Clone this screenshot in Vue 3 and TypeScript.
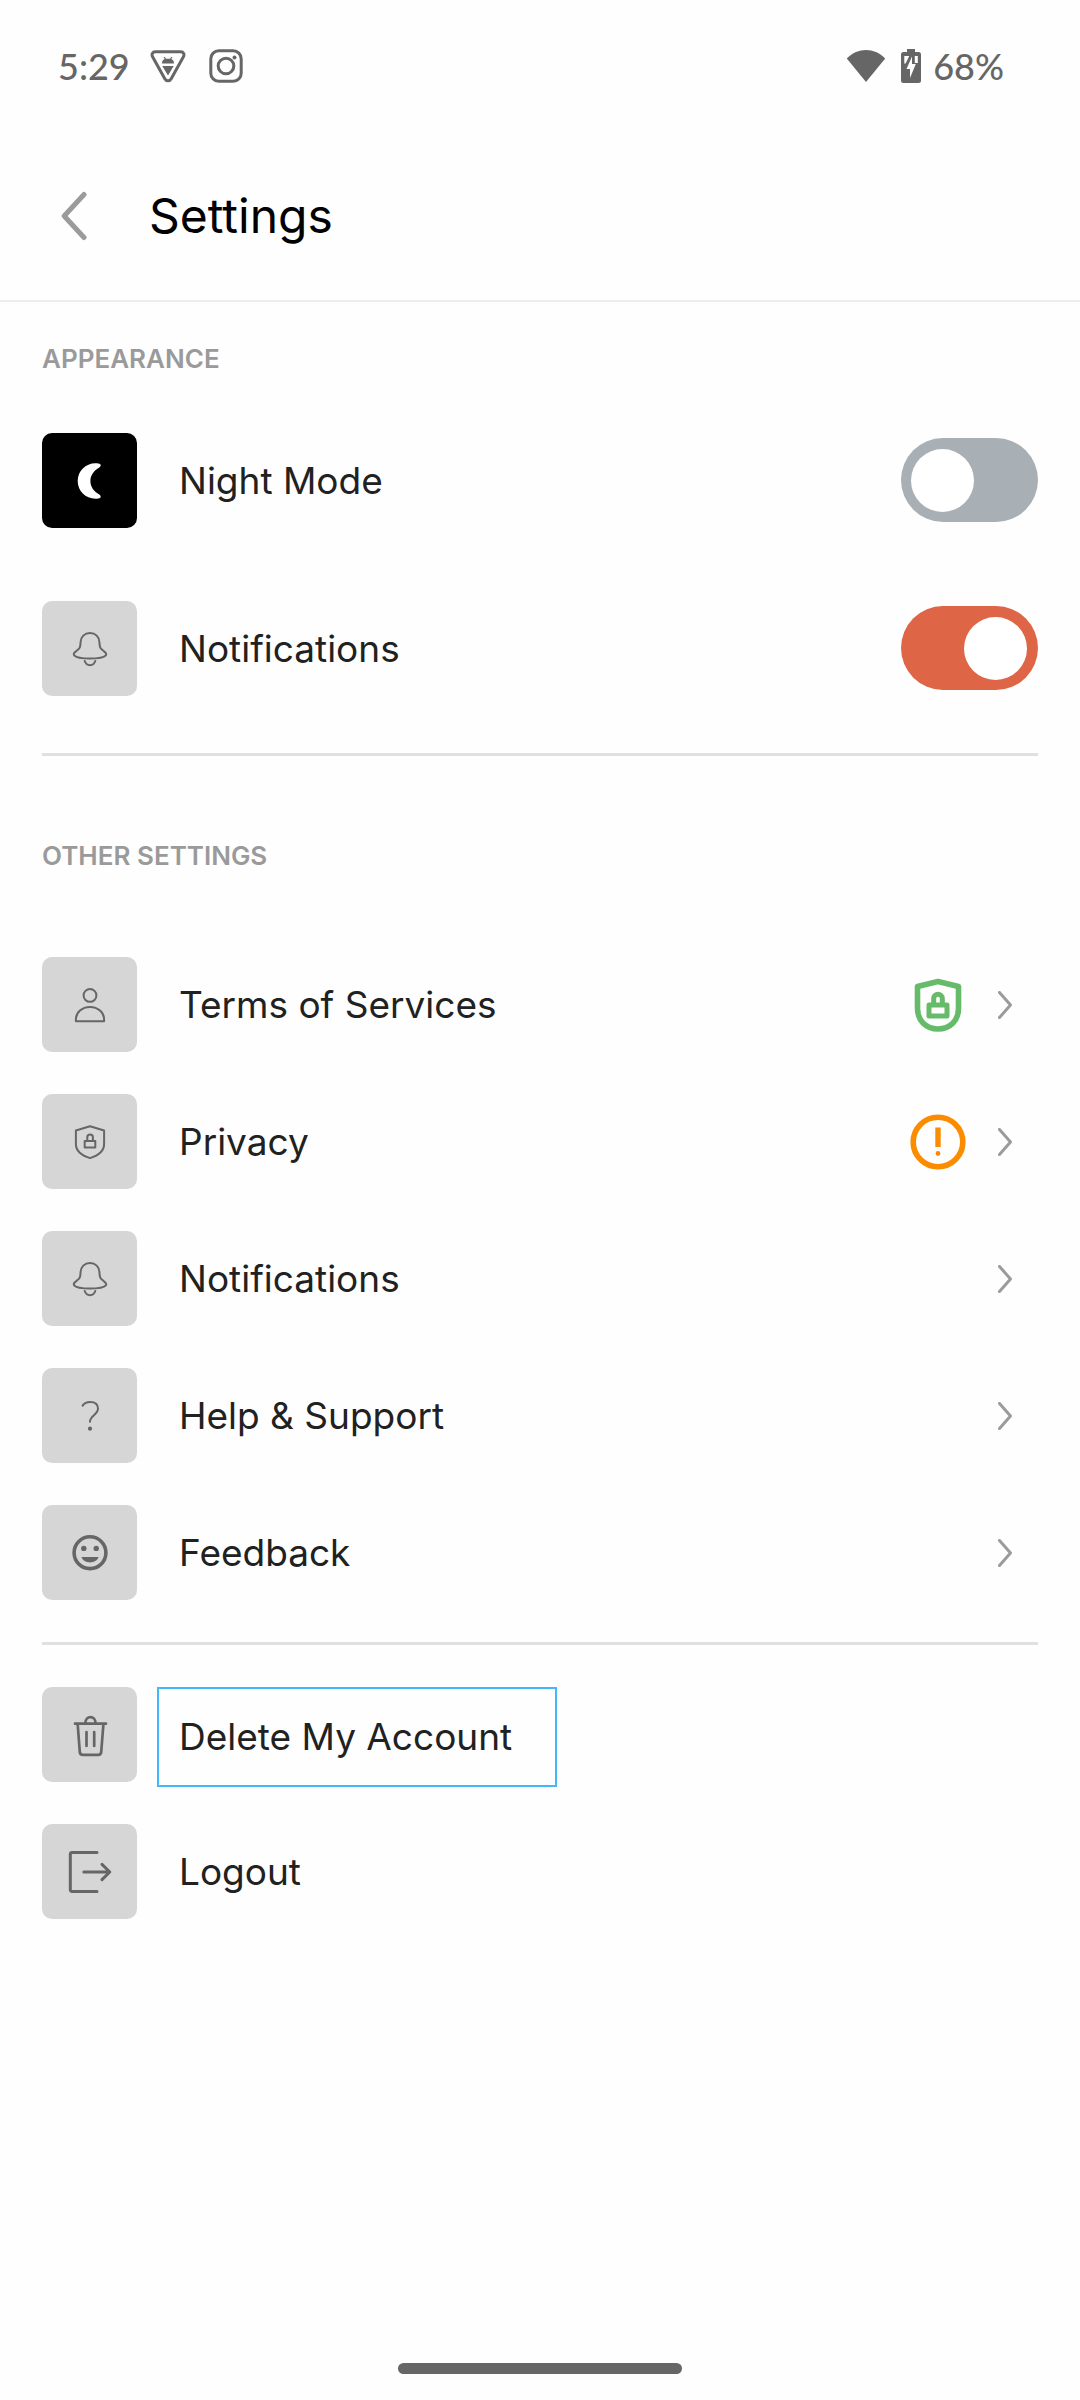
<script setup lang="ts">
import { ref } from 'vue'

type IconName = 'moon' | 'bell' | 'person' | 'shield' | 'question' | 'smile' | 'trash' | 'logout'
type Badge = 'secure' | 'alert'

interface LinkRow {
  icon: IconName
  label: string
  badge?: Badge
}

// Drawn in a 95-unit square, the size of an icon tile.
const icons: Record<IconName, string> = {
  moon: '<path fill="#fff" d="M53.500 30.300C55.500 30.300 57.500 30.700 58.300 31.300C59.100 32.200 58.600 33.800 57.300 34.500C52 37.500 48.400 42 48.400 48C48.400 54 52 58.500 57.300 61.500C58.600 62.200 59.100 63.800 58.300 64.700C57.500 65.300 55.500 65.700 53.500 65.700C43.500 65.700 35.700 57.800 35.700 48C35.700 38.200 43.500 30.300 53.500 30.300Z"/>',
  bell: '<path d="M48 32C42.400 32 38.800 36 38.600 41C38.400 46.500 37.800 47.600 34.600 49.800C31.800 51.600 31.300 53 32.200 54.400C34 56.600 41 57.600 48 57.600C55 57.600 62 56.600 63.800 54.400C64.700 53 64.200 51.600 61.400 49.800C58.200 47.600 57.600 46.500 57.400 41C57.200 36 53.600 32 48 32Z"/><path d="M42.700 60C43.700 62.800 45.700 64.200 48 64.200C50.300 64.200 52.300 62.800 53.300 60"/>',
  person: '<circle cx="48" cy="38.400" r="6.400"/><path d="M33.900 64.200V62.500C33.900 55.500 40 49.900 48 49.900C56 49.900 62.100 55.500 62.100 62.500V64.200Z"/>',
  shield: '<path d="M48 32.200L62.100 36.500V50C62.100 57 56.500 61.500 48 64.100C39.500 61.500 33.900 57 33.900 50V36.500Z"/><path d="M42.700 46.900H53.300V53.600H42.700ZM45.300 46.900V43.300C45.300 39.600 50.900 39.600 50.900 43.300V46.900"/>',
  question: '<path d="M40.600 37.600C42.300 35 45 33.900 48.200 33.900C53.200 33.900 56 36.600 56 40.600C56 46.800 48.200 47.600 47.900 53.800"/><circle cx="48" cy="60.700" r="2.100" fill="#666" stroke="none"/>',
  smile: '<circle cx="48" cy="47.700" r="15.900" stroke-width="3.600"/><g fill="#666" stroke="none"><circle cx="41.800" cy="43.400" r="2.700"/><circle cx="54.200" cy="43.400" r="2.700"/><path d="M39.300 52H56.700C55 55.800 51.800 57.400 48 57.400C44.200 57.400 41 55.800 39.300 52Z"/></g>',
  trash: '<g stroke-width="2.700"><path d="M33 36.700H64M43.300 36.300C43.300 28 53.600 28 53.600 36.300M35.700 37.500L37.800 65C38 66.900 39 67.800 40.700 67.800H56.300C58 67.800 59 66.900 59.200 65L61.400 37.500M44.500 45V59M52.200 45V59"/></g>',
  logout: '<g stroke-width="3"><path d="M55 28.500H30.200Q28.300 28.500 28.300 30.400V65.600Q28.300 67.500 30.200 67.500H55M41.800 48H67.600M60 40.400L67.800 48L60 55.600"/></g>',
}

const nightMode = ref(false)
const notifications = ref(true)

const links: LinkRow[] = [
  { icon: 'person', label: 'Terms of Services', badge: 'secure' },
  { icon: 'shield', label: 'Privacy', badge: 'alert' },
  { icon: 'bell', label: 'Notifications' },
  { icon: 'question', label: 'Help & Support' },
  { icon: 'smile', label: 'Feedback' },
]
</script>

<template>
  <div class="screen">
    <div class="status">
      <span class="status-text">5:29</span>
      <svg class="app-icon" width="36" height="34" viewBox="0 0 36 34" fill="none">
        <path d="M5.500 2.800H30.500C33.600 2.800 34.800 5.400 33.300 8L21.200 29.800C19.700 32.500 16.300 32.500 14.800 29.800L2.700 8C1.200 5.400 2.400 2.800 5.500 2.800Z" stroke="#666" stroke-width="3" />
        <path d="M12 14.500C12 12.200 13 10.800 14.700 10.100L13.600 8H14.900L15.900 9.700H20.100L21.100 8H22.400L21.300 10.100C23 10.800 24 12.200 24 14.500ZM12.300 17H23.700L18 26.500Z" fill="#666" />
      </svg>
      <svg class="camera-icon" width="34" height="34" viewBox="0 0 34 34" fill="none" stroke="#666">
        <rect x="1.800" y="1.800" width="30.400" height="30.400" rx="8" stroke-width="3" />
        <circle cx="17" cy="17" r="7.800" stroke-width="3" />
        <circle cx="25.500" cy="8.500" r="2" fill="#666" stroke="none" />
      </svg>
      <svg class="wifi" width="40" height="34" viewBox="0 0 40 34">
        <path d="M20 33L.8 9.500C12 -1.800 28 -1.800 39.200 9.500Z" fill="#666" />
      </svg>
      <svg class="battery" width="20" height="34" viewBox="0 0 20 34">
        <path d="M6 0H14V3H17.500Q20 3 20 5.500V31.500Q20 34 17.500 34H2.500Q0 34 0 31.500V5.500Q0 3 2.500 3H6Z" fill="#666" />
        <path d="M3.300 7H8.200L4.600 14.500H3.300ZM11 7.500V15H14.800L9 29V20H5.500ZM13.800 7H16.800V14H13.800Z" fill="#fff" />
      </svg>
      <span class="status-text">68%</span>
    </div>

    <header class="topbar">
      <button class="back" type="button" aria-label="Back">
        <svg width="26" height="50" viewBox="0 0 26 50" fill="none">
          <path d="M23 3.500L3.200 25L23 46.500" stroke="#9b9b9b" stroke-width="5" stroke-linecap="round" stroke-linejoin="round" />
        </svg>
      </button>
      <h1>Settings</h1>
    </header>

    <main>
      <section class="appearance">
        <h2>APPEARANCE</h2>
        <div class="rows loose">
          <label class="row">
            <span class="tile dark"><svg class="glyph" viewBox="0 0 95 95" v-html="icons.moon" /></span>
            <span class="label">Night Mode</span>
            <input v-model="nightMode" class="switch" type="checkbox" role="switch" />
          </label>
          <label class="row">
            <span class="tile"><svg class="glyph" viewBox="0 0 95 95" v-html="icons.bell" /></span>
            <span class="label">Notifications</span>
            <input v-model="notifications" class="switch" type="checkbox" role="switch" />
          </label>
        </div>
      </section>
      <hr />
      <section class="other">
        <h2>OTHER SETTINGS</h2>
        <nav class="rows">
          <a v-for="item in links" :key="item.label" class="row" href="#">
            <span class="tile"><svg class="glyph" viewBox="0 0 95 95" v-html="icons[item.icon]" /></span>
            <span class="label">{{ item.label }}</span>
            <svg v-if="item.badge === 'secure'" class="badge" viewBox="0 0 56 56" fill="none" stroke="#66bb6a" stroke-linejoin="round">
              <path d="M28 4.500L48.500 9.500V31.500C48.500 43.500 40 52 28 52C16 52 7.500 43.500 7.500 31.500V9.500Z" stroke-width="5.600" />
              <path d="M19 28H37V39H19Z" stroke-width="5" />
              <path d="M23.700 27V21.500C23.700 15.800 32.300 15.800 32.300 21.500V27" stroke-width="5" />
            </svg>
            <svg v-else-if="item.badge === 'alert'" class="badge" viewBox="0 0 56 56" fill="none">
              <circle cx="28" cy="28" r="24.800" stroke="#fb8c00" stroke-width="5.600" />
              <path d="M25.300 13.500H30.700V33H25.300Z" fill="#fb8c00" />
              <circle cx="28" cy="39.500" r="2.400" fill="#fb8c00" />
            </svg>
            <svg class="chevron" width="14" height="28" viewBox="0 0 14 28" fill="none">
              <path d="M1.500 1.500L12.500 14L1.500 26.500" stroke="#9b9b9b" stroke-width="3" stroke-linecap="round" stroke-linejoin="round" />
            </svg>
          </a>
        </nav>
      </section>
      <hr />
      <section class="rows account">
        <button class="row" type="button">
          <span class="tile"><svg class="glyph" viewBox="0 0 95 95" v-html="icons.trash" /></span>
          <span class="label highlighted">Delete My Account</span>
        </button>
        <button class="row" type="button">
          <span class="tile"><svg class="glyph" viewBox="0 0 95 95" v-html="icons.logout" /></span>
          <span class="label">Logout</span>
        </button>
      </section>
    </main>

    <div class="home-bar"></div>
  </div>
</template>

<style>
body {
  background: #fefefe;
}
</style>

<style scoped>
.screen {
  display: flex;
  flex-direction: column;
  box-sizing: border-box;
  min-height: 100vh;
  padding-bottom: 26px;
  color: #212121;
  font-family: Inter, "Liberation Sans", sans-serif;
}

.status {
  display: flex;
  align-items: center;
  height: 132px;
  padding: 0 76px 0 58px;
}

.status-text {
  color: #666;
  font: 500 36px/40px Lato, "Liberation Sans", sans-serif;
}

.app-icon {
  margin-left: 20px;
}

.camera-icon {
  margin-left: 23px;
}

.wifi {
  margin-left: auto;
}

.battery {
  margin: 0 12px 0 15px;
}

.topbar {
  display: flex;
  align-items: center;
  height: 168px;
  padding-left: 61px;
  border-bottom: 2px solid #ededed;
}

.back {
  display: flex;
  margin-right: 62px;
  padding: 0;
  border: 0;
  background: none;
}

h1 {
  margin: 0;
  color: #000;
  font-size: 48px;
  font-weight: 400;
  line-height: 60px;
}

main {
  padding: 0 42px;
}

h2 {
  margin: 0;
  color: #9a9a9a;
  font-size: 26px;
  font-weight: 600;
  line-height: 40px;
}

.appearance {
  padding: 37px 0 57px;
}

.appearance h2 {
  margin-bottom: 54px;
}

.other {
  padding: 80px 0 42px;
}

.other h2 {
  margin-bottom: 81px;
}

.account {
  padding-top: 42px;
}

hr {
  height: 3px;
  margin: 0;
  border: 0;
  background: #e0e0e0;
}

.rows {
  display: flex;
  flex-direction: column;
  gap: 42px;
}

.loose {
  gap: 73px;
}

.row {
  display: flex;
  align-items: center;
  height: 95px;
  padding: 0;
  border: 0;
  background: none;
  color: inherit;
  font: inherit;
  text-align: left;
  text-decoration: none;
}

.tile {
  flex: none;
  width: 95px;
  height: 95px;
  border-radius: 10px;
  background: #d6d6d6;
}

.dark {
  background: #000;
}

.glyph {
  display: block;
  fill: none;
  stroke: #666;
  stroke-width: 2px;
  stroke-linecap: round;
  stroke-linejoin: round;
}

.dark .glyph {
  stroke: none;
}

.label {
  margin: 0 auto 0 42px;
  font-size: 37px;
  line-height: 49px;
}

.highlighted {
  box-sizing: border-box;
  align-self: flex-start;
  width: 400px;
  height: 100px;
  margin: 0 0 0 20px;
  padding-left: 20px;
  border: 2px solid #42b7fb;
  line-height: 95px;
}

.switch {
  flex: none;
  appearance: none;
  box-sizing: border-box;
  width: 137px;
  height: 84px;
  margin: 0 0 1px;
  padding: 11px 11px 10px 10px;
  border-radius: 42px;
  background: #a8afb5;
}

.switch::before {
  content: "";
  display: block;
  width: 63px;
  height: 63px;
  border-radius: 50%;
  background: #fff;
}

.switch:checked {
  background: #de6646;
}

.switch:checked::before {
  margin-left: auto;
}

.badge {
  flex: none;
  width: 56px;
  height: 56px;
}

.chevron {
  flex: none;
  margin: 0 26px 0 32px;
}

.home-bar {
  width: 284px;
  height: 11px;
  margin: auto auto 0;
  border-radius: 6px;
  background: #666;
}
</style>
